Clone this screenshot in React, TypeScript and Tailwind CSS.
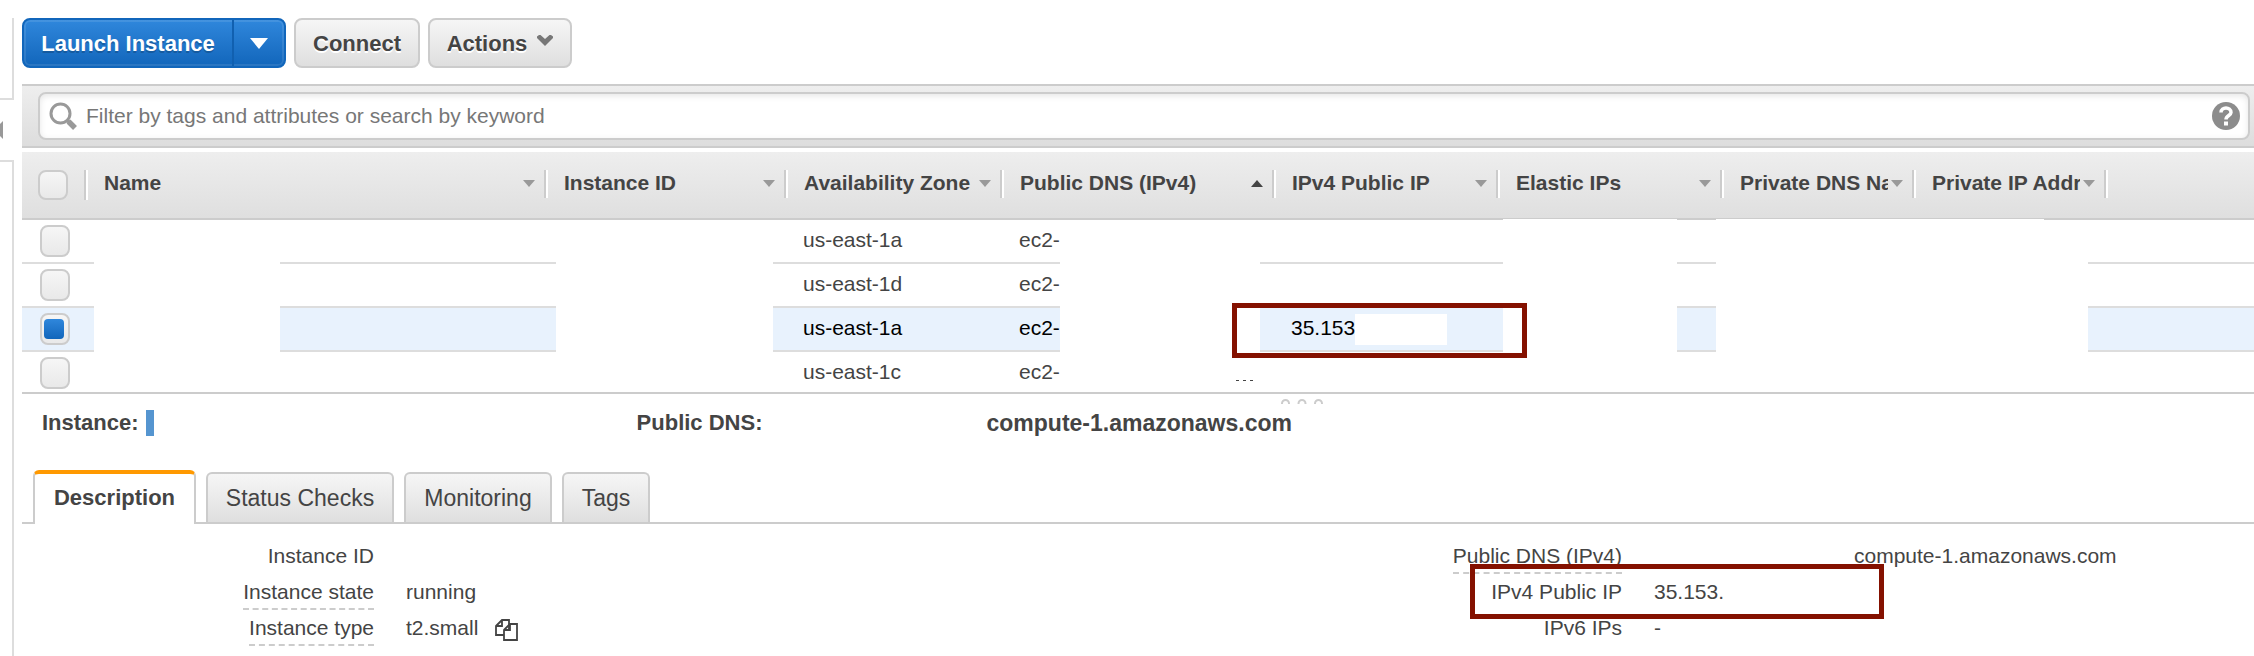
import React from "react";

type Column = { label: string; width: string; sort?: "up" | "down" };

const columns: Column[] = [
  { label: "Name", width: "w-[460px]" },
  { label: "Instance ID", width: "w-[240px]" },
  { label: "Availability Zone", width: "w-[216px]" },
  { label: "Public DNS (IPv4)", width: "w-[272px]", sort: "up" },
  { label: "IPv4 Public IP", width: "w-[224px]" },
  { label: "Elastic IPs", width: "w-[224px]" },
  { label: "Private DNS Name", width: "w-[192px]" },
  { label: "Private IP Address", width: "w-[192px]" },
];

const instances = [
  { zone: "us-east-1a", dns: "ec2-", ip: "", selected: false },
  { zone: "us-east-1d", dns: "ec2-", ip: "", selected: false },
  { zone: "us-east-1a", dns: "ec2-", ip: "35.153", selected: true },
  { zone: "us-east-1c", dns: "ec2-", ip: "", selected: false },
];

/* Patches that hide private values in the instance list. */
const masks = [
  "left-[72px] w-[186px] top-0",
  "left-[534px] w-[217px] top-0",
  "left-[1038px] w-[200px] top-0",
  "left-[1481px] w-[174px] -top-px",
  "left-[1694px] w-[328px] -top-px",
  "left-[2022px] w-[44px] top-0",
];

function Tick({ label, checked, tall }: { label: string; checked?: boolean; tall?: boolean }) {
  return (
    <span className="relative flex">
      <input
        type="checkbox"
        aria-label={label}
        defaultChecked={checked}
        className={
          "peer w-[30px] appearance-none rounded-lg border-2 border-[#ccc] bg-linear-to-b from-[#f6f6f6] to-[#e9e9e9] " +
          (tall ? "h-8" : "h-[30px]")
        }
      />
      <span className="pointer-events-none absolute left-1 top-1.5 hidden h-5 w-5 rounded bg-linear-to-b from-[#2f87dc] to-[#1166bb] peer-checked:block" />
    </span>
  );
}

function Field({ label, dashed, children }: { label: string; dashed?: boolean; children?: React.ReactNode }) {
  return (
    <div className="flex h-9 items-start">
      <dt className="flex w-[352px] shrink-0 justify-end">
        <span className={"h-[34px] leading-8 " + (dashed ? "border-b-2 border-dashed border-[#ccc]" : "")}>{label}</span>
      </dt>
      <dd className="flex pl-8 leading-8">{children}</dd>
    </div>
  );
}

const plainButton =
  "rounded-lg border-2 border-[#ccc] bg-linear-to-b from-[#f6f6f6] to-[#dfdfdf] text-[22px] font-bold [text-shadow:0_2px_0_#fff]";
const plainTab =
  "h-[50px] rounded-t-md border-2 border-b-0 border-[#ccc] bg-linear-to-b from-[#f6f6f6] to-[#dfdfdf] text-[23px] whitespace-nowrap";

export default function App() {
  return (
    <div className="flex min-h-screen overflow-hidden bg-white font-['Liberation_Sans',Arial,sans-serif] text-[21px] text-[#444]">
      <aside className="flex w-[14px] shrink-0 flex-col pt-[18px]">
        <div className="h-[82px] border-r-2 border-b-2 border-[#ddd]" />
        <button aria-label="Collapse navigation" className="flex h-[60px] items-center">
          <svg width="3" height="18" viewBox="0 0 3 18" className="fill-[#999]">
            <path d="M0 3L3 0V18L0 15Z" />
          </svg>
        </button>
        <div className="flex-1 border-t-2 border-r-2 border-[#ddd]" />
      </aside>

      <main className="ml-2 min-w-0 flex-1">
        <div className="flex gap-2 pt-[18px] pb-4">
          <div className="flex h-[50px] rounded-lg border-2 border-[#1166bb] bg-linear-to-b from-[#2f87dc] to-[#1166bb] text-[22px] font-bold text-white shadow-[inset_0_0_0_2px_#ffffff1a]">
            <button className="w-[208px] whitespace-nowrap [text-shadow:0_2px_0_#00000033]">Launch Instance</button>
            <button aria-label="More launch options" className="flex w-[52px] items-center justify-center border-l-2 border-[#1160b0]">
              <svg width="18" height="11" viewBox="0 0 18 11" className="fill-white">
                <path d="M0 0H18L9 11Z" />
              </svg>
            </button>
          </div>
          <button className={plainButton + " w-[126px]"}>Connect</button>
          <button className={plainButton + " flex w-36 items-center justify-center gap-2.5"}>
            Actions
            <svg width="16" height="11" viewBox="0 0 16 11" className="mb-1.5 fill-[#777]">
              <path d="M2 0H3.500L8 4L12.500 0H14L16 1.500V3L8 11L0 3V1.500Z" />
            </svg>
          </button>
        </div>

        <div className="border-y-2 border-[#ccc] bg-linear-to-b from-[#eee] to-[#ddd] py-1.5 pr-1 pl-4">
          <div className="flex h-12 items-center rounded-lg border-2 border-[#ccc] bg-white pr-2 pl-[9px] shadow-[inset_0_2px_6px_#0000001a]">
            <svg width="28" height="28" viewBox="0 0 28 28" className="fill-none stroke-[#999]">
              <circle cx="11.500" cy="11.500" r="9.500" strokeWidth="3" />
              <path d="M18 18L20.500 20.500" strokeWidth="3.500" />
              <path d="M19.500 19.500L26 26" strokeWidth="5.500" />
            </svg>
            <input
              aria-label="Filter instances"
              placeholder="Filter by tags and attributes or search by keyword"
              className="min-w-0 flex-1 bg-transparent pl-[9px] outline-none placeholder:text-[#777]"
            />
            <button aria-label="Help">
              <svg width="28" height="28" viewBox="0 0 28 28">
                <circle cx="14" cy="14" r="14" className="fill-[#8c8c8c]" />
                <path d="M9 10.500C9 4.500 19 4.500 19 10.500C19 13.500 14 13.500 14 17.500" className="fill-none stroke-white" strokeWidth="3.500" />
                <rect x="12" y="19.500" width="4" height="4" className="fill-white" />
              </svg>
            </button>
          </div>
        </div>

        <section className="relative mt-1 h-[242px] overflow-hidden border-b-2 border-[#ccc]">
          <table className="w-full table-fixed border-separate border-spacing-0 text-left">
            <thead>
              <tr className="h-[68px] *:border-b-2 *:border-[#ccc] *:bg-linear-to-b *:from-[#eee] *:to-[#dfdfdf] *:px-0 *:pt-[18px] *:pb-0 *:align-top">
                <th className="w-[66px]">
                  <div className="flex h-[30px] items-center justify-between pl-4">
                    <Tick label="Select all instances" />
                    <span className="h-[30px] w-1 border-l-2 border-[#ccc] bg-white" />
                  </div>
                </th>
                {columns.map((c) => (
                  <th key={c.label} className={c.width}>
                    <div className="flex h-7 items-center pl-4">
                      <span className="h-7 min-w-0 flex-1 overflow-hidden leading-[26px] whitespace-nowrap">{c.label}</span>
                      <svg width="12" height="8" viewBox="0 0 12 8" className="mr-[9px] ml-[3px] shrink-0">
                        {c.sort === "up" ? (
                          <path d="M0 7L6 0L12 7Z" className="fill-[#444]" />
                        ) : (
                          <path d="M0 0H12L6 7Z" className="fill-[#999]" />
                        )}
                      </svg>
                      <span className="h-7 w-1 shrink-0 border-l-2 border-[#ccc] bg-white" />
                    </div>
                  </th>
                ))}
                <th />
              </tr>
            </thead>
            <tbody>
              {instances.map((row, i) => (
                <tr
                  key={i}
                  className={
                    "h-11 *:border-b-2 *:border-[#ddd] *:p-0 " + (row.selected ? "bg-[#e8f2fd] text-black" : "")
                  }
                >
                  <td>
                    <div className="pl-[18px]">
                      <Tick label={"Select instance " + (i + 1)} checked={row.selected} tall />
                    </div>
                  </td>
                  <td />
                  <td />
                  <td>
                    <div className="pb-0.5 pl-[15px]">{row.zone}</div>
                  </td>
                  <td>
                    <div className="pb-0.5 pl-[15px]">{row.dns}</div>
                  </td>
                  <td>
                    <div className="flex items-center pl-[15px]">
                      <span className="pb-0.5">{row.ip}</span>
                      {row.selected && <span className="h-[31px] w-[92px] bg-white" />}
                    </div>
                  </td>
                  <td />
                  <td />
                  <td />
                  <td />
                </tr>
              ))}
            </tbody>
          </table>
          <div className="pointer-events-none absolute inset-x-0 top-[68px] bottom-0">
            {masks.map((m) => (
              <span key={m} className={"absolute bottom-0 bg-white " + m} />
            ))}
            <span className="absolute top-40 left-[1214px] flex gap-1">
              <i className="h-px w-[3px] bg-[#444]" />
              <i className="h-px w-[3px] bg-[#444]" />
              <i className="h-px w-[3px] bg-[#444]" />
            </span>
          </div>
        </section>

        <div className="pointer-events-none absolute top-[303px] left-[1232px] h-[55px] w-[295px] border-[5px] border-[#841100]" />

        <section className="relative">
          <svg width="42" height="5" viewBox="0 0 42 5" className="absolute top-[5px] left-[1259px] fill-none stroke-[#ccc]" strokeWidth="2">
            <circle cx="4.500" cy="4.500" r="3.500" />
            <circle cx="21" cy="4.500" r="3.500" />
            <circle cx="37.500" cy="4.500" r="3.500" />
          </svg>
          <div className="flex items-center pt-4 pl-5 text-[22px] leading-[26px] font-bold">
            <span>Instance:</span>
            <span className="ml-[7px] h-[26px] w-2 bg-[#5595d0]" />
            <span className="ml-[483px]">Public DNS:</span>
            <span className="ml-[224px] text-[23px]">compute-1.amazonaws.com</span>
          </div>

          <div role="tablist" className="mt-[34px] flex h-[54px] items-end">
            <span className="w-[11px] border-b-2 border-[#ccc]" />
            <button
              role="tab"
              aria-selected="true"
              className="h-[54px] w-[163px] rounded-t-md border-x-2 border-t-4 border-x-[#ccc] border-t-[#ff9900] bg-white pb-1 text-[22px] font-bold"
            >
              Description
            </button>
            <div className="flex h-[52px] flex-1 gap-2.5 border-b-2 border-[#ccc] pl-2.5">
              <button role="tab" className={plainTab + " w-[188px]"}>Status Checks</button>
              <button role="tab" className={plainTab + " w-[148px]"}>Monitoring</button>
              <button role="tab" className={plainTab + " w-[88px]"}>Tags</button>
            </div>
          </div>

          <div className="grid grid-cols-[1248fr_984fr] pt-4">
            <dl>
              <Field label="Instance ID" />
              <Field label="Instance state" dashed>running</Field>
              <Field label="Instance type" dashed>
                t2.small
                <button aria-label="Copy" className="mt-1.5 ml-[17px] h-6">
                  <svg width="23" height="22" viewBox="0 0 23 22" className="fill-white stroke-[#444]" strokeWidth="1.800">
                    <path d="M1 7L7 1H14V16H1Z M1 7H7V1" />
                    <path d="M9 11L15 5H22V21H9Z M9 11H15V5" />
                  </svg>
                </button>
              </Field>
            </dl>
            <dl>
              <Field label="Public DNS (IPv4)" dashed>
                <span className="pl-[200px]">compute-1.amazonaws.com</span>
              </Field>
              <Field label="IPv4 Public IP">35.153.</Field>
              <Field label="IPv6 IPs">-</Field>
            </dl>
          </div>
        </section>
        <div className="pointer-events-none absolute top-[564px] left-[1470px] h-[55px] w-[414px] border-[5px] border-[#841100]" />
      </main>
    </div>
  );
}
